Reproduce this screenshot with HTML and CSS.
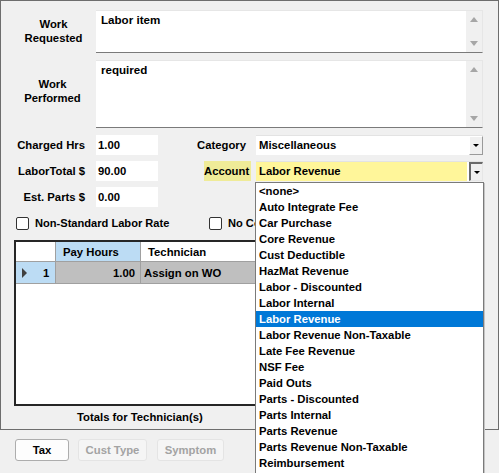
FILE: index.html
```html
<!DOCTYPE html>
<html>
<head>
<meta charset="utf-8">
<link rel="stylesheet" href="styles.css">
</head>
<body>
<div class="panel">
  <div class="note-row">
    <div class="note-label">Work<br>Requested</div>
    <div class="note-box">
      <div class="note-text">Labor item</div>
      <div class="vscroll"><span class="tri-up"></span><span class="tri-down"></span></div>
    </div>
  </div>
  <div class="note-row perf">
    <div class="note-label perf-label">Work<br>Performed</div>
    <div class="note-box">
      <div class="note-text">required</div>
      <div class="vscroll"><span class="tri-up"></span><span class="tri-down"></span></div>
    </div>
  </div>

  <div class="form">
    <div class="frow">
      <div class="flabel">Charged Hrs</div>
      <div class="finput">1.00</div>
      <div class="rlabel"><span class="rtext">Category</span></div>
      <div class="select">
        <div class="sval">Miscellaneous</div>
        <div class="sbtn"><span class="tri-sel"></span></div>
      </div>
    </div>
    <div class="frow">
      <div class="flabel">LaborTotal $</div>
      <div class="finput">90.00</div>
      <div class="rlabel"><span class="rtext hl">Account</span></div>
      <div class="select">
        <div class="sval yellow">Labor Revenue</div>
        <div class="sbtn pressed"><span class="tri-sel"></span></div>
      </div>
    </div>
    <div class="frow">
      <div class="flabel">Est. Parts $</div>
      <div class="finput">0.00</div>
    </div>
  </div>

  <div class="checks">
    <div class="chk-group first"><span class="chk"></span><span class="chk-label">Non-Standard Labor Rate</span></div>
    <div class="chk-group second"><span class="chk"></span><span class="chk-label">No Commission</span></div>
  </div>

  <div class="grid">
    <div class="ghead">
      <div class="gcell corner"></div>
      <div class="gcell c-hours head-sel">Pay Hours</div>
      <div class="gcell c-tech">Technician</div>
    </div>
    <div class="grow">
      <div class="gcell corner row-head"><span class="tri-row"></span><span class="row-num">1</span></div>
      <div class="gcell c-hours data num">1.00</div>
      <div class="gcell c-tech data">Assign on WO</div>
    </div>
  </div>
  <div class="totals">Totals for Technician(s)</div>
</div>

<div class="buttons">
  <div class="btn tax">Tax</div>
  <div class="btn disabled cust">Cust Type</div>
  <div class="btn disabled symptom">Symptom</div>
</div>

<div class="droplist">
  <div class="item">&lt;none&gt;</div>
  <div class="item">Auto Integrate Fee</div>
  <div class="item">Car Purchase</div>
  <div class="item">Core Revenue</div>
  <div class="item">Cust Deductible</div>
  <div class="item">HazMat Revenue</div>
  <div class="item">Labor - Discounted</div>
  <div class="item">Labor Internal</div>
  <div class="item selected">Labor Revenue</div>
  <div class="item">Labor Revenue Non-Taxable</div>
  <div class="item">Late Fee Revenue</div>
  <div class="item">NSF Fee</div>
  <div class="item">Paid Outs</div>
  <div class="item">Parts - Discounted</div>
  <div class="item">Parts Internal</div>
  <div class="item">Parts Revenue</div>
  <div class="item">Parts Revenue Non-Taxable</div>
  <div class="item">Reimbursement</div>
</div>
</body>
</html>
```

FILE: styles.css
```css
html, body {
  margin: 0;
  padding: 0;
}
body {
  width: 499px;
  height: 473px;
  overflow: hidden;
  position: relative;
  background: #f0f0f0;
  font-family: "Liberation Sans", Arial, sans-serif;
  font-weight: bold;
  font-size: 11.3px;
  color: #000;
}

.panel {
  box-sizing: border-box;
  width: 499px;
  height: 430px;
  border: 1px solid #6d6d6d;
  padding-top: 9px;
}

/* notes */
.note-row {
  display: flex;
  height: 43px;
}
.note-row.perf {
  height: 68px;
  margin-top: 7px;
}
.note-label {
  box-sizing: border-box;
  width: 95px;
  padding-left: 10px;
  padding-bottom: 1px;
  display: flex;
  flex-direction: column;
  justify-content: center;
  align-items: center;
  text-align: center;
  line-height: 14px;
}
.perf-label {
  padding-left: 8px;
  padding-bottom: 7px;
}
.note-box {
  box-sizing: border-box;
  width: 387px;
  background: #fff;
  border-top: 1px solid #e6e6e6;
  border-right: 1px solid #e6e6e6;
  border-bottom: 1px solid #7a7a7a;
  display: flex;
}
.note-text {
  flex: 1;
  padding: 2px 0 0 5px;
  line-height: 14px;
  font-size: 11.6px;
}
.vscroll {
  width: 16px;
  background: #f0f0f0;
  display: flex;
  flex-direction: column;
  justify-content: space-between;
  align-items: center;
  padding: 6px 0;
}
.tri-up {
  width: 0;
  height: 0;
  border-left: 4px solid transparent;
  border-right: 4px solid transparent;
  border-bottom: 5px solid #a6a6a6;
}
.tri-down {
  width: 0;
  height: 0;
  border-left: 4px solid transparent;
  border-right: 4px solid transparent;
  border-top: 5px solid #a6a6a6;
}

/* form */
.form {
  margin-top: 7px;
  display: flex;
  flex-direction: column;
  gap: 6px;
}
.frow {
  display: flex;
  height: 20px;
  align-items: stretch;
}
.flabel {
  width: 84px;
  margin-right: 11px;
  text-align: right;
  line-height: 20px;
}
.finput {
  box-sizing: border-box;
  width: 62px;
  background: #fff;
  padding-left: 2px;
  line-height: 20px;
}
.rlabel {
  width: 93px;
  margin-right: 5px;
  display: flex;
  justify-content: flex-end;
}
.rtext {
  padding-right: 5px;
  line-height: 20px;
}
.rtext.hl {
  box-sizing: border-box;
  width: 47px;
  padding-right: 0;
  background: #efeb98;
}
.select {
  box-sizing: border-box;
  width: 227px;
  background: #fff;
  border-top: 1px solid #e3e3e3;
  display: flex;
}
.sval {
  flex: 1;
  padding-left: 3px;
  line-height: 19px;
}
.sval.yellow {
  background: #fff69a;
  margin-right: 2px;
}
.sbtn {
  box-sizing: border-box;
  width: 14px;
  background: #f0f0f0;
  border-top: 1px solid #fff;
  border-left: 1px solid #fff;
  border-right: 1px solid #9a9a9a;
  border-bottom: 1px solid #9a9a9a;
  display: flex;
  align-items: center;
  justify-content: center;
}
.sbtn.pressed {
  border-top: 2px solid #6a6a6a;
  border-left: 2px solid #6a6a6a;
  border-right: 1px solid #e6e6e6;
  border-bottom: 1px solid #e6e6e6;
}
.tri-sel {
  width: 0;
  height: 0;
  border-left: 3px solid transparent;
  border-right: 3px solid transparent;
  border-top: 3px solid #000;
}

/* checkboxes */
.checks {
  margin-top: 10px;
  height: 13px;
  display: flex;
  padding-left: 15px;
}
.chk-group {
  display: flex;
  align-items: center;
}
.chk-group.first {
  width: 193px;
}
.chk-group.second {
  width: 46px;
  overflow: hidden;
  white-space: nowrap;
}
.chk {
  flex: none;
  box-sizing: border-box;
  width: 13px;
  height: 13px;
  border: 1px solid #333;
  border-radius: 2px;
  background: #fff;
  margin-right: 6px;
}
.chk-label {
  line-height: 13px;
  font-size: 11.1px;
}

/* grid */
.grid {
  box-sizing: border-box;
  margin-top: 10px;
  margin-left: 13px;
  width: 470px;
  height: 166px;
  border: 2px solid #262626;
  background: #fff;
}
.ghead {
  display: flex;
  height: 20px;
  box-sizing: border-box;
  border-bottom: 1px solid #a0a0a0;
}
.grow {
  display: flex;
  height: 22px;
  box-sizing: border-box;
  border-bottom: 1px solid #a0a0a0;
}
.gcell {
  box-sizing: border-box;
  border-right: 1px solid #a0a0a0;
  display: flex;
  align-items: center;
}
.corner {
  width: 40px;
}
.c-hours {
  width: 85px;
  padding-left: 7px;
}
.c-tech {
  flex: 1;
  padding-left: 7px;
  border-right: none;
}
.head-sel {
  background: #bcdcf4;
}
.row-head {
  background: #bcdcf4;
  padding-left: 6px;
}
.tri-row {
  width: 0;
  height: 0;
  border-top: 5px solid transparent;
  border-bottom: 5px solid transparent;
  border-left: 5px solid #404040;
}
.row-num {
  margin-left: 16px;
}
.data {
  background: #bfbfbf;
}
.c-hours.num {
  justify-content: flex-end;
  padding-right: 5px;
  padding-left: 0;
}
.c-tech.data {
  padding-left: 3px;
  border-right: none;
}
.totals {
  margin-top: 3px;
  padding-left: 76px;
  line-height: 16px;
}

/* buttons */
.buttons {
  margin-top: 9px;
  padding-left: 15px;
  display: flex;
}
.btn {
  box-sizing: border-box;
  height: 22px;
  border-radius: 3px;
  display: flex;
  align-items: center;
  justify-content: center;
}
.tax {
  width: 54px;
  background: #fdfdfd;
  border: 1px solid #adadad;
  margin-right: 9px;
}
.disabled {
  background: #f5f5f5;
  border: 1px solid #e4e4e4;
  color: #a3a3a3;
}
.cust {
  width: 69px;
  margin-right: 10px;
}
.symptom {
  width: 67px;
}

/* dropdown list */
.droplist {
  position: absolute;
  left: 255px;
  top: 182px;
  box-sizing: border-box;
  width: 229px;
  height: 300px;
  background: #fff;
  border: 1px solid #7a7a7a;
  box-shadow: 1px 1px 0 #c4c4c4;
}
.item {
  height: 16px;
  line-height: 16px;
  padding-left: 3px;
  white-space: nowrap;
}
.item.selected {
  background: #0078d7;
  color: #fff;
}
```
